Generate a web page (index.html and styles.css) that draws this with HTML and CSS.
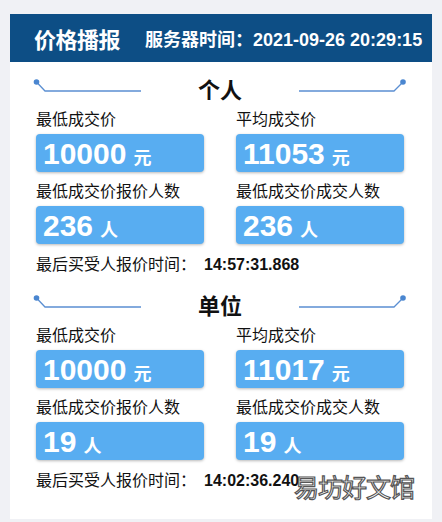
FILE: index.html
```html
<!DOCTYPE html>
<html lang="zh">
<head>
<meta charset="utf-8">
<title>价格播报</title>
<link rel="stylesheet" href="styles.css">
</head>
<body>
<div class="panel">
  <div class="header">
    <span class="title">价格播报</span>
    <span class="server">服务器时间：2021-09-26 20:29:15</span>
  </div>
  <div class="content">
    <section class="section">
      <div class="heading">
        <svg class="deco" width="108" height="24" viewBox="0 0 108 24"><polyline points="3.5,3 12,12 108,12" fill="none" stroke="#5b8fd2" stroke-width="1.3"/><circle cx="3.5" cy="3" r="2.8" fill="#4a86d0"/></svg>
        <span class="htext">个人</span>
        <svg class="deco" width="108" height="24" viewBox="0 0 108 24"><polyline points="0,12 95,12 104,3" fill="none" stroke="#5b8fd2" stroke-width="1.3"/><circle cx="104" cy="3" r="2.8" fill="#4a86d0"/></svg>
      </div>
      <div class="grid">
        <div class="item"><div class="label">最低成交价</div><div class="box"><span class="num">10000</span><span class="unit">元</span></div></div>
        <div class="item"><div class="label">平均成交价</div><div class="box"><span class="num">11053</span><span class="unit">元</span></div></div>
        <div class="item"><div class="label">最低成交价报价人数</div><div class="box"><span class="num">236</span><span class="unit">人</span></div></div>
        <div class="item"><div class="label">最低成交价成交人数</div><div class="box"><span class="num">236</span><span class="unit">人</span></div></div>
      </div>
      <div class="footer">最后买受人报价时间：<span class="time">14:57:31.868</span></div>
    </section>
    <section class="section second">
      <div class="heading">
        <svg class="deco" width="108" height="24" viewBox="0 0 108 24"><polyline points="3.5,3 12,12 108,12" fill="none" stroke="#5b8fd2" stroke-width="1.3"/><circle cx="3.5" cy="3" r="2.8" fill="#4a86d0"/></svg>
        <span class="htext">单位</span>
        <svg class="deco" width="108" height="24" viewBox="0 0 108 24"><polyline points="0,12 95,12 104,3" fill="none" stroke="#5b8fd2" stroke-width="1.3"/><circle cx="104" cy="3" r="2.8" fill="#4a86d0"/></svg>
      </div>
      <div class="grid">
        <div class="item"><div class="label">最低成交价</div><div class="box"><span class="num">10000</span><span class="unit">元</span></div></div>
        <div class="item"><div class="label">平均成交价</div><div class="box"><span class="num">11017</span><span class="unit">元</span></div></div>
        <div class="item"><div class="label">最低成交价报价人数</div><div class="box"><span class="num">19</span><span class="unit">人</span></div></div>
        <div class="item"><div class="label">最低成交价成交人数</div><div class="box"><span class="num">19</span><span class="unit">人</span></div></div>
      </div>
      <div class="footer">最后买受人报价时间：<span class="time">14:02:36.240</span></div>
    </section>
  </div>
</div>
<div class="watermark">易坊好文馆</div>
</body>
</html>
```

FILE: styles.css
```css
html, body {
  margin: 0;
  padding: 0;
}
body {
  background: #f0f1f5;
  padding: 14px 10px 0 10px;
  width: 422px;
  height: 508px;
  position: relative;
  font-family: "Liberation Sans", "Noto Sans CJK SC", sans-serif;
  color: #111;
}
.panel {
  background: #ffffff;
}
.header {
  background: #0d4e85;
  height: 48px;
  display: flex;
  align-items: center;
  padding-left: 24px;
  color: #ffffff;
  font-weight: bold;
}
.title {
  font-size: 22px;
  letter-spacing: -0.5px;
}
.server {
  font-size: 18px;
  margin-left: 25px;
}
.content {
  padding: 15px 28px 26px 26px;
}
.second {
  margin-top: 16px;
}
.heading {
  display: flex;
  align-items: center;
  justify-content: space-between;
  height: 28px;
  margin: 0 -3px 0 -3px;
}
.deco {
  display: block;
}
.htext {
  font-size: 22px;
  font-weight: bold;
  line-height: 28px;
  color: #111;
}
.grid {
  display: grid;
  grid-template-columns: 168px 168px;
  column-gap: 32px;
  row-gap: 8px;
  margin-top: 3px;
}
.label {
  font-size: 16px;
  line-height: 24px;
  color: #111;
  white-space: nowrap;
}
.box {
  margin-top: 2px;
  height: 38px;
  box-sizing: border-box;
  padding: 2px 0 0 7px;
  line-height: 36px;
  background: #58adf1;
  border-radius: 4px;
  box-shadow: 0 1px 3px rgba(0, 0, 0, 0.28);
  color: #ffffff;
  font-weight: bold;
  white-space: nowrap;
}
.num {
  font-size: 30px;
}
.unit {
  font-size: 18px;
  margin-left: 7px;
}
.footer {
  margin-top: 9px;
  font-size: 16px;
  line-height: 24px;
  white-space: nowrap;
}
.time {
  font-weight: bold;
  margin-left: 8px;
}
.watermark {
  position: absolute;
  left: 294px;
  top: 471px;
  font-size: 25px;
  line-height: 30px;
  letter-spacing: -1px;
  color: #ffffff;
  -webkit-text-stroke: 1.2px #555;
  font-family: "Noto Sans CJK SC", sans-serif;
}
```
